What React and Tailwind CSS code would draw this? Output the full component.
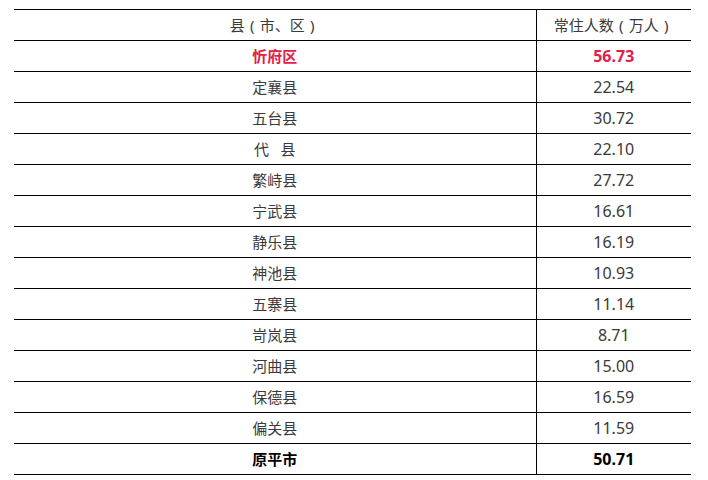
const rows = [
  { name: "忻府区", value: "56.73", kind: "red" },
  { name: "定襄县", value: "22.54" },
  { name: "五台县", value: "30.72" },
  { name: "代   县", value: "22.10" },
  { name: "繁峙县", value: "27.72" },
  { name: "宁武县", value: "16.61" },
  { name: "静乐县", value: "16.19" },
  { name: "神池县", value: "10.93" },
  { name: "五寨县", value: "11.14" },
  { name: "岢岚县", value: "8.71" },
  { name: "河曲县", value: "15.00" },
  { name: "保德县", value: "16.59" },
  { name: "偏关县", value: "11.59" },
  { name: "原平市", value: "50.71", kind: "bold" },
];

// centered half-width paren in a full-width box, like the source font draws it
function Paren({ children }) {
  return <span className="inline-block w-[15px] text-center">{children}</span>;
}

function App() {
  return (
    <div
      className="w-[708px] h-[480px] bg-white pt-[9px] pl-[14px]"
      style={{ fontFamily: '"Noto Sans", "Noto Sans CJK SC", sans-serif' }}
    >
      <table className="w-[677px] border-collapse text-[15px] text-[#3a3a3a]">
        <thead>
          <tr className="h-[31px] border-y border-black">
            <td className="w-[522px] text-center p-0 font-normal">
              县<Paren>(</Paren>市、区<Paren>)</Paren>
            </td>
            <td className="text-center p-0 border-l border-black">
              常住人数<Paren>(</Paren>万人<Paren>)</Paren>
            </td>
          </tr>
        </thead>
        <tbody>
          {rows.map((r) => {
            const cls =
              r.kind === "red"
                ? "text-[#e2204a] font-bold"
                : r.kind === "bold"
                ? "text-black font-bold"
                : "";
            return (
              <tr key={r.name} className="h-[31px] border-b border-black">
                <td className={`text-center p-0 whitespace-pre ${cls}`}>
                  {r.name}
                </td>
                <td
                  className={`text-center p-0 text-[16px] border-l border-black ${cls}`}
                >
                  {r.value}
                </td>
              </tr>
            );
          })}
        </tbody>
      </table>
    </div>
  );
}

export default App;
